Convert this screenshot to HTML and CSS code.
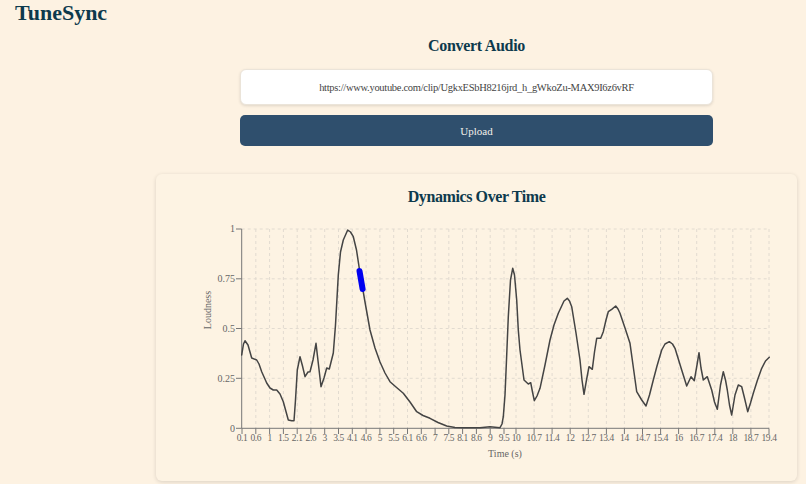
FILE: index.html
```html
<html>
    <head>
        <title>TuneSync</title>
        <link rel="stylesheet" href="styles.css">
    </head>
    <body>
        <header class="topbar">
            <h1 class="brand">TuneSync</h1>
        </header>
        <main class="content">
            <section class="convert">
                <h2 class="section-title">Convert Audio</h2>
                <input type="text" class="url-input" value="https://www.youtube.com/clip/UgkxESbH8216jrd_h_gWkoZu-MAX9I6z6vRF" />
                <button type="button" class="upload-btn">Upload</button>
            </section>

            <section class="chart-card">
                <h2 class="chart-title">Dynamics Over Time</h2>
                <svg class="chart" width="641" height="262" viewBox="156 214 641 262">
                    <!-- grid -->
                    <g class="grid">
                        <line x1="241.7" y1="229" x2="769" y2="229" />
                        <line x1="241.7" y1="278.8" x2="769" y2="278.8" />
                        <line x1="241.7" y1="328.5" x2="769" y2="328.5" />
                        <line x1="241.7" y1="378.3" x2="769" y2="378.3" />
                        <line x1="255.8" y1="229" x2="255.8" y2="428" />
                        <line x1="269.6" y1="229" x2="269.6" y2="428" />
                        <line x1="283.4" y1="229" x2="283.4" y2="428" />
                        <line x1="297.2" y1="229" x2="297.2" y2="428" />
                        <line x1="310.9" y1="229" x2="310.9" y2="428" />
                        <line x1="324.7" y1="229" x2="324.7" y2="428" />
                        <line x1="338.5" y1="229" x2="338.5" y2="428" />
                        <line x1="352.3" y1="229" x2="352.3" y2="428" />
                        <line x1="366.1" y1="229" x2="366.1" y2="428" />
                        <line x1="379.9" y1="229" x2="379.9" y2="428" />
                        <line x1="393.7" y1="229" x2="393.7" y2="428" />
                        <line x1="407.5" y1="229" x2="407.5" y2="428" />
                        <line x1="421.3" y1="229" x2="421.3" y2="428" />
                        <line x1="435.1" y1="229" x2="435.1" y2="428" />
                        <line x1="448.8" y1="229" x2="448.8" y2="428" />
                        <line x1="462.6" y1="229" x2="462.6" y2="428" />
                        <line x1="476.4" y1="229" x2="476.4" y2="428" />
                        <line x1="490.2" y1="229" x2="490.2" y2="428" />
                        <line x1="504" y1="229" x2="504" y2="428" />
                        <line x1="516" y1="229" x2="516" y2="428" />
                        <line x1="534.1" y1="229" x2="534.1" y2="428" />
                        <line x1="552.1" y1="229" x2="552.1" y2="428" />
                        <line x1="570.2" y1="229" x2="570.2" y2="428" />
                        <line x1="588.3" y1="229" x2="588.3" y2="428" />
                        <line x1="606.4" y1="229" x2="606.4" y2="428" />
                        <line x1="624.4" y1="229" x2="624.4" y2="428" />
                        <line x1="642.5" y1="229" x2="642.5" y2="428" />
                        <line x1="660.6" y1="229" x2="660.6" y2="428" />
                        <line x1="678.6" y1="229" x2="678.6" y2="428" />
                        <line x1="696.7" y1="229" x2="696.7" y2="428" />
                        <line x1="714.8" y1="229" x2="714.8" y2="428" />
                        <line x1="732.8" y1="229" x2="732.8" y2="428" />
                        <line x1="750.9" y1="229" x2="750.9" y2="428" />
                        <line x1="769" y1="229" x2="769" y2="428" />
                    </g>

                    <!-- axes -->
                    <g class="axis">
                        <line x1="241.7" y1="229" x2="241.7" y2="428.3" />
                        <line x1="241.7" y1="428.3" x2="769" y2="428.3" />
                        <line x1="236" y1="229" x2="241.7" y2="229" />
                        <line x1="236" y1="278.8" x2="241.7" y2="278.8" />
                        <line x1="236" y1="328.5" x2="241.7" y2="328.5" />
                        <line x1="236" y1="378.3" x2="241.7" y2="378.3" />
                        <line x1="236" y1="428.3" x2="241.7" y2="428.3" />
                        <line x1="242" y1="428.3" x2="242" y2="434" />
                        <line x1="255.8" y1="428.3" x2="255.8" y2="434" />
                        <line x1="269.6" y1="428.3" x2="269.6" y2="434" />
                        <line x1="283.4" y1="428.3" x2="283.4" y2="434" />
                        <line x1="297.2" y1="428.3" x2="297.2" y2="434" />
                        <line x1="310.9" y1="428.3" x2="310.9" y2="434" />
                        <line x1="324.7" y1="428.3" x2="324.7" y2="434" />
                        <line x1="338.5" y1="428.3" x2="338.5" y2="434" />
                        <line x1="352.3" y1="428.3" x2="352.3" y2="434" />
                        <line x1="366.1" y1="428.3" x2="366.1" y2="434" />
                        <line x1="379.9" y1="428.3" x2="379.9" y2="434" />
                        <line x1="393.7" y1="428.3" x2="393.7" y2="434" />
                        <line x1="407.5" y1="428.3" x2="407.5" y2="434" />
                        <line x1="421.3" y1="428.3" x2="421.3" y2="434" />
                        <line x1="435.1" y1="428.3" x2="435.1" y2="434" />
                        <line x1="448.8" y1="428.3" x2="448.8" y2="434" />
                        <line x1="462.6" y1="428.3" x2="462.6" y2="434" />
                        <line x1="476.4" y1="428.3" x2="476.4" y2="434" />
                        <line x1="490.2" y1="428.3" x2="490.2" y2="434" />
                        <line x1="504" y1="428.3" x2="504" y2="434" />
                        <line x1="516" y1="428.3" x2="516" y2="434" />
                        <line x1="534.1" y1="428.3" x2="534.1" y2="434" />
                        <line x1="552.1" y1="428.3" x2="552.1" y2="434" />
                        <line x1="570.2" y1="428.3" x2="570.2" y2="434" />
                        <line x1="588.3" y1="428.3" x2="588.3" y2="434" />
                        <line x1="606.4" y1="428.3" x2="606.4" y2="434" />
                        <line x1="624.4" y1="428.3" x2="624.4" y2="434" />
                        <line x1="642.5" y1="428.3" x2="642.5" y2="434" />
                        <line x1="660.6" y1="428.3" x2="660.6" y2="434" />
                        <line x1="678.6" y1="428.3" x2="678.6" y2="434" />
                        <line x1="696.7" y1="428.3" x2="696.7" y2="434" />
                        <line x1="714.8" y1="428.3" x2="714.8" y2="434" />
                        <line x1="732.8" y1="428.3" x2="732.8" y2="434" />
                        <line x1="750.9" y1="428.3" x2="750.9" y2="434" />
                        <line x1="769" y1="428.3" x2="769" y2="434" />
                    </g>

                    <g class="tick-y">
                        <text x="235" y="232">1</text>
                        <text x="235" y="282">0.75</text>
                        <text x="235" y="332">0.5</text>
                        <text x="235" y="381.5">0.25</text>
                        <text x="235" y="431.5">0</text>
                    </g>

                    <g class="tick-x">
                        <text x="242" y="441">0.1</text>
                        <text x="255.8" y="441">0.6</text>
                        <text x="269.6" y="441">1</text>
                        <text x="283.4" y="441">1.5</text>
                        <text x="297.2" y="441">2.1</text>
                        <text x="310.9" y="441">2.6</text>
                        <text x="324.7" y="441">3</text>
                        <text x="338.5" y="441">3.5</text>
                        <text x="352.3" y="441">4.1</text>
                        <text x="366.1" y="441">4.6</text>
                        <text x="379.9" y="441">5</text>
                        <text x="393.7" y="441">5.5</text>
                        <text x="407.5" y="441">6.1</text>
                        <text x="421.3" y="441">6.6</text>
                        <text x="435.1" y="441">7</text>
                        <text x="448.8" y="441">7.5</text>
                        <text x="462.6" y="441">8.1</text>
                        <text x="476.4" y="441">8.6</text>
                        <text x="490.2" y="441">9</text>
                        <text x="504" y="441">9.5</text>
                        <text x="516" y="441">10</text>
                        <text x="534.1" y="441">10.7</text>
                        <text x="552.1" y="441">11.4</text>
                        <text x="570.2" y="441">12</text>
                        <text x="588.3" y="441">12.7</text>
                        <text x="606.4" y="441">13.4</text>
                        <text x="624.4" y="441">14</text>
                        <text x="642.5" y="441">14.7</text>
                        <text x="660.6" y="441">15.4</text>
                        <text x="678.6" y="441">16</text>
                        <text x="696.7" y="441">16.7</text>
                        <text x="714.8" y="441">17.4</text>
                        <text x="732.8" y="441">18</text>
                        <text x="750.9" y="441">18.7</text>
                        <text x="769" y="441">19.4</text>
                    </g>

                    <text class="axis-label" x="505" y="457">Time (s)</text>
                    <text class="axis-label" x="208" y="313" transform="rotate(-90 208 310)">Loudness</text>

                    <!-- loudness curve -->
                    <polyline class="curve" points="241.7,355 243.5,344 245,340.7 248,345 251.7,358 256.7,360 259,364 261.7,371.7 266.7,383 270,388 273.3,390 276.7,390 280,394 283.3,401.7 288.3,420 291.7,420.7 294,420.7 295.5,400 297.3,370 300,356.7 302.5,366 305,376.7 308,372 310,371.7 313,360 316,343.3 318.5,365 321,386.7 324,378 326.7,368 329.3,369 333.3,353 335.5,325 338.3,275 340.5,252 343.3,240 347.7,230 350.5,232 353.3,236.7 356.5,250 360,273 365,302 370,330 375,348 380,362 385,373 390,381.7 396,387 403.3,393.3 410,402 416.7,411.7 423,415.5 430,418.3 438,422.5 446.7,426 455,427.5 463.3,427.7 480,427.7 490,426.7 500,427.7 502,424 503.3,416.7 505,395 506.5,360 508.3,316.7 510.5,280 512.7,268.3 514.5,275 516.7,300 518.3,330 520,350 524,380 528.3,384 530.7,382.7 532.5,392 534.3,400.7 537,396 540,388.3 545,365 550,340 554,325 558.3,313.3 564,301 567.3,298.3 569.5,301 571.7,306.7 576,333 580,360 582,380 584,394.3 586.5,380 589,366.7 592.3,369.3 594.5,352 596.7,338.3 600.7,338.3 603.3,331.7 606,320 608.3,311.7 611.7,309.3 615.7,306 618,309 620,313.3 625,328 630,343.3 633,365 636.7,391.7 641.7,400 646,406 649.5,395 653.3,380 657,366 661.7,350 665,344 669.3,341.7 672.5,344 675,348.3 678,358 681.7,370 686.7,386 691,376.7 694.3,380.7 697,365 699,352.7 701,368 703.3,380 707.3,376.7 711.7,390 714.5,402 717.3,409.3 720.5,385 723.3,371.7 725.5,380 727.3,390 729.5,405 731.7,415 735,395 738.3,385 741.7,386.7 744.5,398 747.7,411.7 750.5,403 753.3,393.3 757.5,380 761.7,368.3 765.5,361 769.3,357.3" />
                    <line class="marker" x1="359.5" y1="271" x2="362.6" y2="289" />
                </svg>
            </section>
        </main>
    </body>
</html>
```

FILE: styles.css
```css
body{
    margin: 0;
    background: #fdf2e2;
    font-family: "Liberation Serif", "Times New Roman", serif;
    color: #0d3a4d;
}
.topbar{
    height: 26px;
    padding-left: 15px;
}
.brand{
    margin: 0;
    font-size: 22px;
    line-height: 26px;
    font-weight: bold;
    color: #0d3a4d;
}
.content{
    width: 641px;
    margin-left: 156px;
}
.convert{
    width: 473px;
    margin: 10px auto 0 auto;
    display: flex;
    flex-direction: column;
}
.section-title{
    margin: 0;
    font-size: 16px;
    line-height: 20px;
    letter-spacing: -0.3px;
    text-align: center;
}
.url-input{
    margin-top: 13px;
    height: 36px;
    box-sizing: border-box;
    border: 1px solid #ebe4d9;
    border-radius: 6px;
    background: #ffffff;
    box-shadow: 0 1px 3px rgba(0, 0, 0, 0.12);
    font-family: "Liberation Serif", serif;
    font-size: 10.5px;
    letter-spacing: -0.3px;
    color: #444;
    text-align: center;
    padding: 0 8px;
}
.upload-btn{
    margin-top: 10px;
    height: 31px;
    border: none;
    border-radius: 5px;
    background: #2f4f6d;
    color: #f4f1ea;
    font-family: "Liberation Serif", serif;
    font-size: 11px;
}
.chart-card{
    margin-top: 28px;
    padding: 13px 0 5px 0;
    border-radius: 6px;
    background: #fdf3e3;
    box-shadow: 0 1px 4px rgba(0, 0, 0, 0.14);
}
.chart-title{
    margin: 0 0 7px 0;
    font-size: 16px;
    line-height: 20px;
    letter-spacing: -0.4px;
    text-align: center;
}
.chart{
    display: block;
}
.grid line{
    stroke: #e2dbd0;
    stroke-width: 1;
    stroke-dasharray: 3 3;
}
.axis line{
    stroke: #777;
    stroke-width: 1;
}
.tick-y text{
    font-family: "Liberation Serif", serif;
    font-size: 10px;
    fill: #666;
    text-anchor: end;
}
.tick-x text{
    font-family: "Liberation Serif", serif;
    font-size: 9.5px;
    letter-spacing: -0.4px;
    fill: #666;
    text-anchor: middle;
}
.axis-label{
    font-family: "Liberation Serif", serif;
    font-size: 10px;
    fill: #666;
    text-anchor: middle;
}
.curve{
    fill: none;
    stroke: #444;
    stroke-width: 1.5;
    stroke-linejoin: round;
    stroke-linecap: round;
}
.marker{
    stroke: #0000f0;
    stroke-width: 6;
    stroke-linecap: round;
}
```
